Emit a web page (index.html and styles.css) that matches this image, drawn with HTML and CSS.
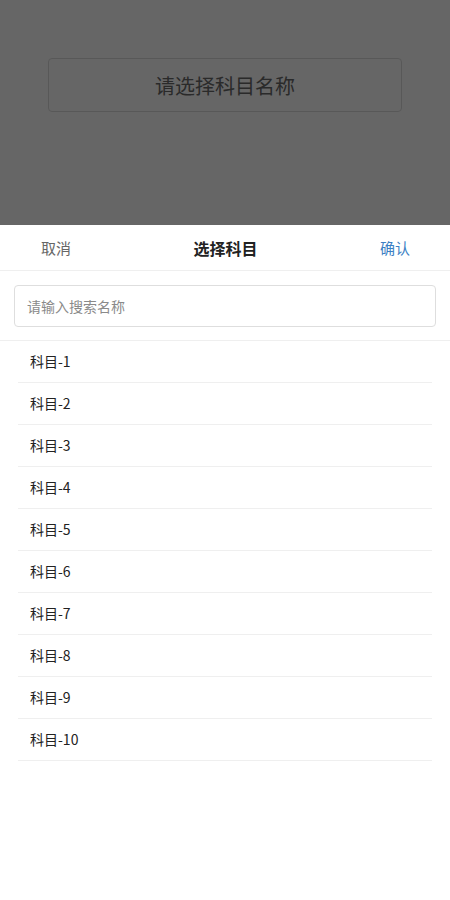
FILE: index.html
```html
<!DOCTYPE html>
<html lang="zh">
<head>
<meta charset="utf-8">
<title>选择科目</title>
<link rel="stylesheet" href="styles.css">
</head>
<body>
<div class="page">
  <div class="select-btn">请选择科目名称</div>
</div>
<div class="mask"></div>
<div class="popup">
  <div class="popup-header">
    <span class="btn-cancel">取消</span>
    <span class="popup-title">选择科目</span>
    <span class="btn-confirm">确认</span>
  </div>
  <div class="search-wrap">
    <input class="search-input" type="text" placeholder="请输入搜索名称">
  </div>
  <ul class="list">
    <li class="item">科目-1</li>
    <li class="item">科目-2</li>
    <li class="item">科目-3</li>
    <li class="item">科目-4</li>
    <li class="item">科目-5</li>
    <li class="item">科目-6</li>
    <li class="item">科目-7</li>
    <li class="item">科目-8</li>
    <li class="item">科目-9</li>
    <li class="item">科目-10</li>
  </ul>
</div>
</body>
</html>
```
FILE: styles.css
```css
* { box-sizing: border-box; }
html, body {
  margin: 0;
  padding: 0;
  background: #fff;
  font-family: "Noto Sans CJK SC", "Noto Sans", sans-serif;
}
.page {
  padding: 58px 48px 0;
}
.select-btn {
  height: 54px;
  border: 1px solid #dcdcdc;
  border-radius: 4px;
  display: flex;
  align-items: center;
  justify-content: center;
  font-size: 20px;
  color: #6a6a6a;
}
.mask {
  position: fixed;
  top: 0; left: 0; right: 0; bottom: 0;
  background: rgba(0, 0, 0, 0.6);
}
.popup {
  position: fixed;
  left: 0; right: 0; bottom: 0;
  height: 675px;
  background: #fff;
}
.popup-header {
  height: 46px;
  border-bottom: 1px solid #efefef;
  display: flex;
  align-items: center;
  justify-content: space-between;
  padding: 0 40px 0 41px;
}
.btn-cancel {
  font-size: 15px;
  color: #666;
}
.btn-confirm {
  font-size: 15px;
  color: #3c7fc4;
}
.popup-title {
  font-size: 16px;
  font-weight: bold;
  color: #222;
}
.search-wrap {
  padding: 14px 14px 13px;
  border-bottom: 1px solid #efefef;
}
.search-input {
  display: block;
  width: 100%;
  height: 42px;
  border: 1px solid #dedede;
  border-radius: 4px;
  padding: 0 12px;
  font-size: 14px;
  font-family: inherit;
  color: #333;
  outline: none;
}
.search-input::placeholder { color: #8a8a8a; }
.list {
  list-style: none;
  margin: 0 18px;
  padding: 0;
}
.item {
  height: 42px;
  border-bottom: 1px solid #efefef;
  padding-left: 12px;
  padding-bottom: 1px;
  display: flex;
  align-items: center;
  font-size: 14px;
  color: #222;
}
```
